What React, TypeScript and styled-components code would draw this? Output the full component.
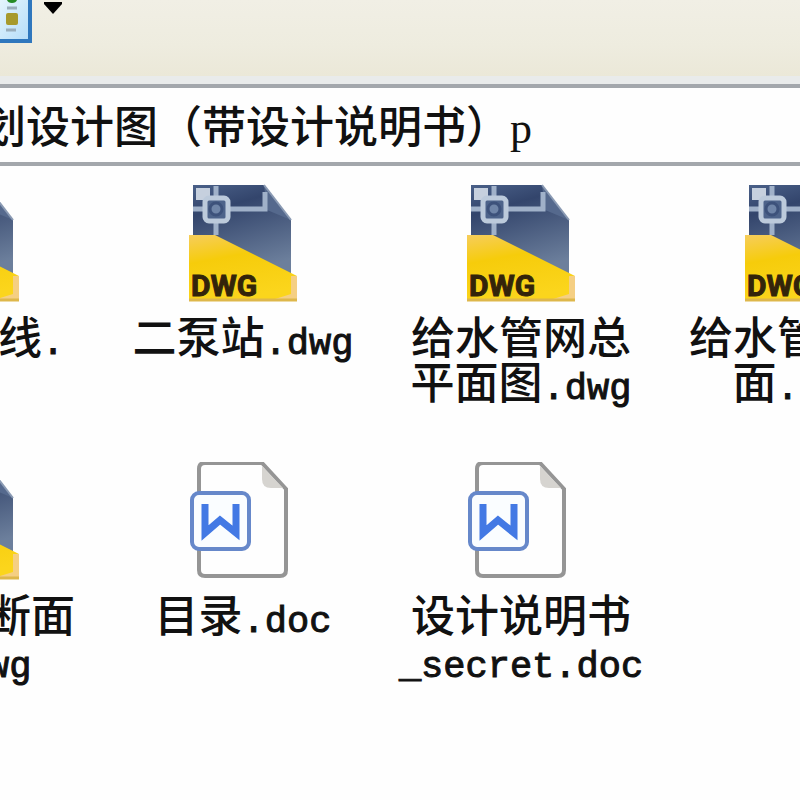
import React, { useState } from "react";
import styled, { createGlobalStyle } from "styled-components";

const GlobalStyle = createGlobalStyle`
  * { box-sizing: border-box; }
  body { margin: 0; background: #fefefe; color: #111; overflow-x: hidden; }
`;

const Window = styled.div`
  min-height: 100vh;
  overflow: hidden;
  background: #fefefe;
`;

const Toolbar = styled.header`
  display: flex;
  align-items: flex-start;
  height: 76px;
  background: linear-gradient(#f1efe5, #eeecdf 60%, #ebe8d8);
`;

const ViewButton = styled.button`
  display: flex;
  align-items: flex-start;
  gap: 12px;
  margin: 0;
  padding: 0;
  border: 0;
  background: none;
`;

const AddressBar = styled.div`
  display: flex;
  height: 90px;
  border-top: 8px solid #e9ebeb;
  background: #fefefe;
`;

const AddressField = styled.input`
  flex: 1;
  min-width: 0;
  margin: 0 -8px 0 -66px;
  padding: 8px 0 0;
  border: 4px solid #a3a7ac;
  background: #fefefe;
  color: #111;
  font: 500 44px/64px "Liberation Serif", "Noto Sans CJK SC", serif;
  outline: none;
`;

const FileGrid = styled.main`
  display: grid;
  grid-template-columns: repeat(4, 278px);
  grid-auto-rows: 278px;
  margin-left: -174px;
  padding-top: 18px;
`;

const FileItem = styled.figure`
  display: flex;
  flex-direction: column;
  align-items: center;
  gap: 10px;
  margin: 0;
`;

const FileName = styled.figcaption`
  display: flex;
  flex-direction: column;
  align-items: center;
  font: 500 44px/45px "Noto Sans CJK SC", sans-serif;
`;

const NameLine = styled.span`
  display: block;
  height: 45px;
  white-space: nowrap;
`;

const Latin = styled.span`
  font: 500 37px/45px "Liberation Mono", monospace;
  -webkit-text-stroke: 1px #111;
`;

function ViewIcon() {
  return (
    <svg width="32" height="43" viewBox="0 0 32 43" aria-hidden="true">
      <defs>
        <linearGradient id="view" x1="0" y1="0" x2="1" y2="1">
          <stop offset="0" stopColor="#e4f5fd" />
          <stop offset="1" stopColor="#b4dcf8" />
        </linearGradient>
      </defs>
      <path d="M0 0H30V41H0Z" fill="url(#view)" />
      <path d="M30 0V41H0" fill="none" stroke="#2f77bd" strokeWidth="4" />
      <path d="M7 0H17Q16 3 12 3Q8 3 7 0Z" fill="#258a25" />
      <path d="M7 8H17M6 30H16" stroke="#9aaebc" strokeWidth="3" />
      <rect x="6" y="13" width="12" height="12" rx="2" fill="#a79a2c" />
    </svg>
  );
}

function CaretIcon() {
  return (
    <svg width="20" height="16" viewBox="0 0 20 16" aria-hidden="true">
      <path d="M0 2H18V4L9 14L0 4Z" fill="#000" />
    </svg>
  );
}

function DwgIcon() {
  return (
    <svg width="112" height="119" viewBox="0 0 112 119" role="img" aria-label="DWG">
      <defs>
        <linearGradient id="sheet" x1="0" y1="0" x2="0.3" y2="1">
          <stop offset="0" stopColor="#4a6088" />
          <stop offset="0.3" stopColor="#33456c" />
          <stop offset="1" stopColor="#6c7f9c" />
        </linearGradient>
        <linearGradient id="band" x1="0" y1="0" x2="0.3" y2="1">
          <stop offset="0" stopColor="#f6cd5c" />
          <stop offset="0.4" stopColor="#f6cc0b" />
          <stop offset="1" stopColor="#fbd51c" />
        </linearGradient>
      </defs>
      <path d="M6 1H77L104 36V95H6Z" fill="url(#sheet)" />
      <path d="M77 1L104 36L80 26Z" fill="#55698d" />
      <path d="M77 1L104 36" stroke="#8a9ab3" strokeWidth="2" />
      <path d="M9 4H23V16H9Z" fill="#c6d0de" />
      <path d="M29 2V51M6 25H78V8" fill="none" stroke="#a0b1c9" strokeWidth="5" />
      <rect x="18" y="14" width="23" height="23" rx="4" fill="#4d638a" stroke="#bccadb" strokeWidth="5" />
      <circle cx="29" cy="25" r="6" fill="#6f85a8" stroke="#3d527b" strokeWidth="3" />
      <path d="M2 51H28L104 89L110 92V117H2Z" fill="url(#band)" />
      <path d="M104 92V110L88 115H110V92Z" fill="#f5cf83" />
      <path d="M2 116H110" stroke="#deb74b" strokeWidth="3" />
      <text x="4" y="112" fontFamily="Roboto, sans-serif" fontWeight="700" fontSize="30" fill="#33240a" stroke="#33240a">DWG</text>
    </svg>
  );
}

function DocIcon() {
  return (
    <svg width="112" height="119" viewBox="0 0 112 119" role="img" aria-label="DOC">
      <path d="M18 1H75L99 27V108Q99 114 93 114H18Q12 114 12 108V7Q12 1 18 1Z" fill="#fefefe" stroke="#959595" strokeWidth="4" />
      <path d="M75 4V17Q75 26 84 26H96Z" fill="#d6d4d0" />
      <rect x="5" y="31" width="57" height="56" rx="7" fill="#fafdff" stroke="#6688ca" strokeWidth="4" />
      <path d="M18 42V71L33 58L49 71V42" fill="none" stroke="#4379e4" strokeWidth="7" />
    </svg>
  );
}

type Kind = "dwg" | "doc";
type Line = [cjk: string, latin: string];

const files: { kind: Kind; lines: Line[] }[] = [
  { kind: "dwg", lines: [["给水管线", "."], ["", "dwg"]] },
  { kind: "dwg", lines: [["二泵站", ".dwg"]] },
  { kind: "dwg", lines: [["给水管网总", ""], ["平面图", ".dwg"]] },
  { kind: "dwg", lines: [["给水管网断", ""], ["面", ".dwg"]] },
  { kind: "dwg", lines: [["给水纵断面", ""], ["图", ".dwg"]] },
  { kind: "doc", lines: [["目录", ".doc"]] },
  { kind: "doc", lines: [["设计说明书", ""], ["", "_secret.doc"]] },
];

export default function App() {
  const [address, setAddress] = useState("规划设计图（带设计说明书）p");
  return (
    <Window>
      <GlobalStyle />
      <Toolbar>
        <ViewButton type="button" aria-label="查看">
          <ViewIcon />
          <CaretIcon />
        </ViewButton>
      </Toolbar>
      <AddressBar>
        <AddressField
          aria-label="地址"
          value={address}
          onChange={(event) => setAddress(event.target.value)}
        />
      </AddressBar>
      <FileGrid>
        {files.map(({ kind, lines }, index) => (
          <FileItem key={index}>
            {kind === "dwg" ? <DwgIcon /> : <DocIcon />}
            <FileName>
              {lines.map(([cjk, latin]) => (
                <NameLine key={cjk + latin}>
                  {cjk}
                  {latin && <Latin>{latin}</Latin>}
                </NameLine>
              ))}
            </FileName>
          </FileItem>
        ))}
      </FileGrid>
    </Window>
  );
}
